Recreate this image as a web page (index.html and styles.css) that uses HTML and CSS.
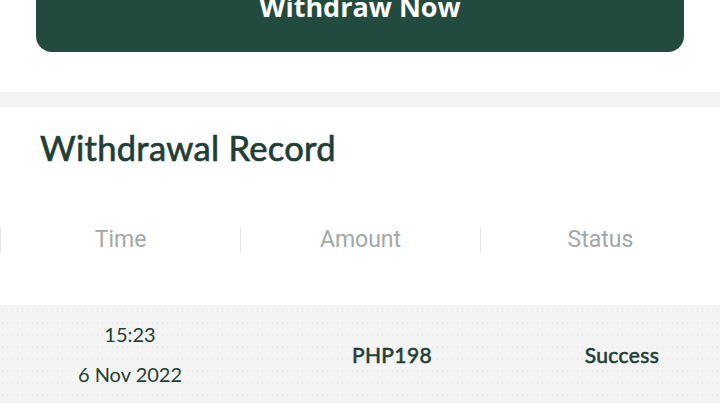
FILE: index.html
```html
<!DOCTYPE html>
<html lang="en">
<head>
    <meta charset="UTF-8">
    <meta name="viewport" content="width=device-width, initial-scale=1.0">
    <title>Withdrawal Record</title>
    <link rel="stylesheet" href="styles.css">
</head>
<body>
    <div class="action">
        <button class="withdraw-btn">Withdraw Now</button>
    </div>
    <div class="divider-band"></div>
    <section class="record">
        <h2>Withdrawal Record</h2>
        <div class="record-head">
            <div class="head-cell">Time</div>
            <div class="head-cell">Amount</div>
            <div class="head-cell">Status</div>
        </div>
        <div class="record-row">
            <div class="cell cell-time">
                <span>15:23</span>
                <span>6 Nov 2022</span>
            </div>
            <div class="cell cell-amount">PHP198</div>
            <div class="cell cell-status">Success</div>
        </div>
    </section>
</body>
</html>
```

FILE: styles.css
```css
:root {
  --brand-green: #234a3f;
  --text-dark: #1f3f36;
  --muted: #a2a7a8;
  --band: #f4f4f4;
}

body {
  margin: 0;
  background: #ffffff;
  font-family: "Noto Sans", sans-serif;
  width: 720px;
  height: 414px;
  overflow: hidden;
}

.action {
  padding: 0 36px;
  height: 120px;
  margin-top: -28px;
}

.withdraw-btn {
  display: flex;
  align-items: center;
  justify-content: center;
  width: 100%;
  height: 80px;
  padding-bottom: 12px;
  border: none;
  border-radius: 16px;
  background: var(--brand-green);
  color: #ffffff;
  font-family: "Open Sans", sans-serif;
  font-weight: 700;
  font-size: 27px;
}

.divider-band {
  height: 15px;
  background: var(--band);
}

.record {
  background: #ffffff;
}

.record h2 {
  margin: 0;
  padding: 21px 40px 0;
  height: 57px;
  font-family: "Lato", sans-serif;
  font-weight: 400;
  font-size: 34.5px;
  line-height: 40px;
  color: var(--text-dark);
  letter-spacing: 0.3px;
  -webkit-text-stroke: 0.7px var(--text-dark);
}

.record-head {
  display: grid;
  grid-template-columns: repeat(3, 240px);
  padding-top: 42px;
  height: 120px;
  box-sizing: border-box;
}

.head-cell {
  height: 26px;
  line-height: 26px;
  text-align: center;
  font-family: "Roboto", sans-serif;
  font-size: 23px;
  color: var(--muted);
  border-left: 1.5px solid #e4e6e6;
}

.record-row {
  display: grid;
  grid-template-columns: 260px 264px 196px;
  align-items: center;
  height: 98px;
  background-color: var(--band);
  background-image: radial-gradient(circle, #e9e9e9 0.5px, transparent 0.8px);
  background-size: 5px 12px;
}

.cell {
  text-align: center;
  font-family: "Lato", sans-serif;
  font-size: 20px;
  color: var(--text-dark);
}

.cell-time {
  display: flex;
  flex-direction: column;
  gap: 16px;
  line-height: 24px;
}

.cell-amount,
.cell-status {
  font-size: 21px;
  font-weight: 400;
  letter-spacing: 0.4px;
  -webkit-text-stroke: 0.6px var(--text-dark);
}
```
